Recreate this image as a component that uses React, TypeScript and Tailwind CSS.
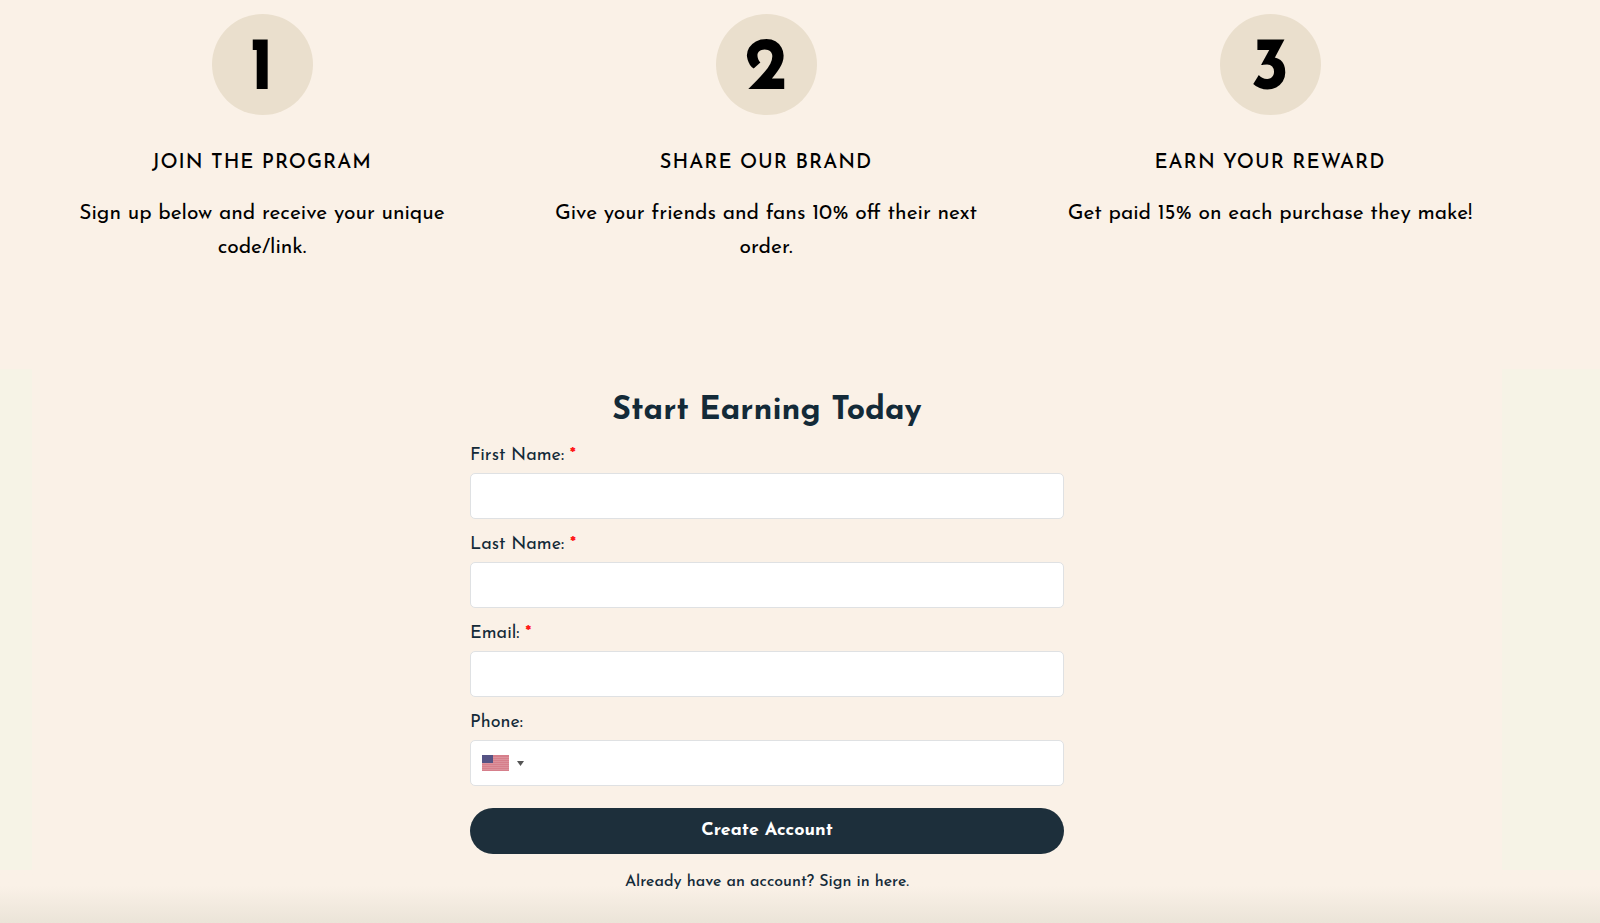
import { useState } from "react";

interface Step {
  number: string;
  title: string;
  text: string;
}

interface Field {
  id: string;
  label: string;
  type: string;
  required: boolean;
}

const steps: Step[] = [
  {
    number: "1",
    title: "Join the program",
    text: "Sign up below and receive your unique code/link.",
  },
  {
    number: "2",
    title: "Share our brand",
    text: "Give your friends and fans 10% off their next order.",
  },
  {
    number: "3",
    title: "Earn your reward",
    text: "Get paid 15% on each purchase they make!",
  },
];

const fields: Field[] = [
  { id: "firstName", label: "First Name:", type: "text", required: true },
  { id: "lastName", label: "Last Name:", type: "text", required: true },
  { id: "email", label: "Email:", type: "email", required: true },
];

function UsFlag() {
  return (
    <svg width="27" height="16" viewBox="0 0 27 16" aria-hidden="true">
      <rect width="27" height="16" fill="#d67f8b" />
      {[2, 4, 6, 8, 10, 12, 14].map((y) => (
        <rect key={y} y={y} width="27" height="1" fill="#dc929c" />
      ))}
      <rect width="11" height="8" fill="#555384" />
    </svg>
  );
}

export default function App() {
  const [values, setValues] = useState<Record<string, string>>({});

  const update = (id: string, value: string) => {
    setValues({ ...values, [id]: value });
  };

  return (
    <div className="min-h-screen flex flex-col bg-[#faf1e7] font-['Josefin_Sans',Lato,sans-serif]">
      {/* Steps */}
      <section className="grid grid-cols-3 gap-16 pt-[14px] pb-[104px] pl-[42px] pr-[110px] text-center text-black">
        {steps.map((step) => (
          <div key={step.number} className="flex flex-col items-center">
            <div className="flex size-[101px] items-center justify-center rounded-full bg-[#eadfcd] pt-3 text-[75px] leading-none font-bold">
              {step.number}
            </div>
            <h3 className="mt-[34px] text-xl leading-7 font-medium tracking-wider uppercase">
              {step.title}
            </h3>
            <p className="mt-5 text-[21px] leading-[34px]">{step.text}</p>
          </div>
        ))}
      </section>

      {/* Sign up form */}
      <section className="bg-[#f6f3e6] pl-8 pr-[98px]">
        <div className="bg-[#faf1e7] pt-[23px] pb-4">
          <form
            className="mx-auto max-w-[594px] text-[#132a38]"
            onSubmit={(e) => e.preventDefault()}
          >
            <h2 className="text-center text-[32px] leading-[38px] font-bold">
              Start Earning Today
            </h2>
            {fields.map((field) => (
              <div key={field.id} className="mt-[10px]">
                <label
                  htmlFor={field.id}
                  className="mb-px block text-lg leading-8"
                >
                  {field.label}{" "}
                  <span className="font-bold text-[#ff1a1a]">*</span>
                </label>
                <input
                  id={field.id}
                  type={field.type}
                  required={field.required}
                  value={values[field.id] ?? ""}
                  onChange={(e) => update(field.id, e.target.value)}
                  className="block h-[46px] w-full rounded-[5px] border border-[#dfe1e3] bg-white px-3 text-lg"
                />
              </div>
            ))}
            <div className="mt-[10px]">
              <label htmlFor="phone" className="mb-px block text-lg leading-8">
                Phone:
              </label>
              <div className="flex h-[46px] rounded-[5px] border border-[#dfe1e3] bg-white">
                <button
                  type="button"
                  aria-label="Country code"
                  className="flex items-center gap-2 pl-[11px] pr-2"
                >
                  <UsFlag />
                  <svg width="7" height="5" viewBox="0 0 7 5" aria-hidden="true">
                    <path d="M0 0h7L3.5 5z" fill="#555" />
                  </svg>
                </button>
                <input
                  id="phone"
                  type="tel"
                  value={values.phone ?? ""}
                  onChange={(e) => update("phone", e.target.value)}
                  className="min-w-0 flex-1 rounded-[5px] text-lg outline-none"
                />
              </div>
            </div>
            <button
              type="submit"
              className="mt-[22px] block h-[46px] w-full rounded-full bg-[#1d2f3b] text-lg font-bold text-white"
            >
              Create Account
            </button>
          </form>
        </div>
      </section>

      <div className="flex-1 bg-linear-to-b from-[#faf1e7] from-30% to-[#ebe4d8] pl-8 pr-[98px] text-center">
        <a href="#" className="text-base leading-6 font-medium text-[#132a38]">
          Already have an account? Sign in here.
        </a>
      </div>
    </div>
  );
}
